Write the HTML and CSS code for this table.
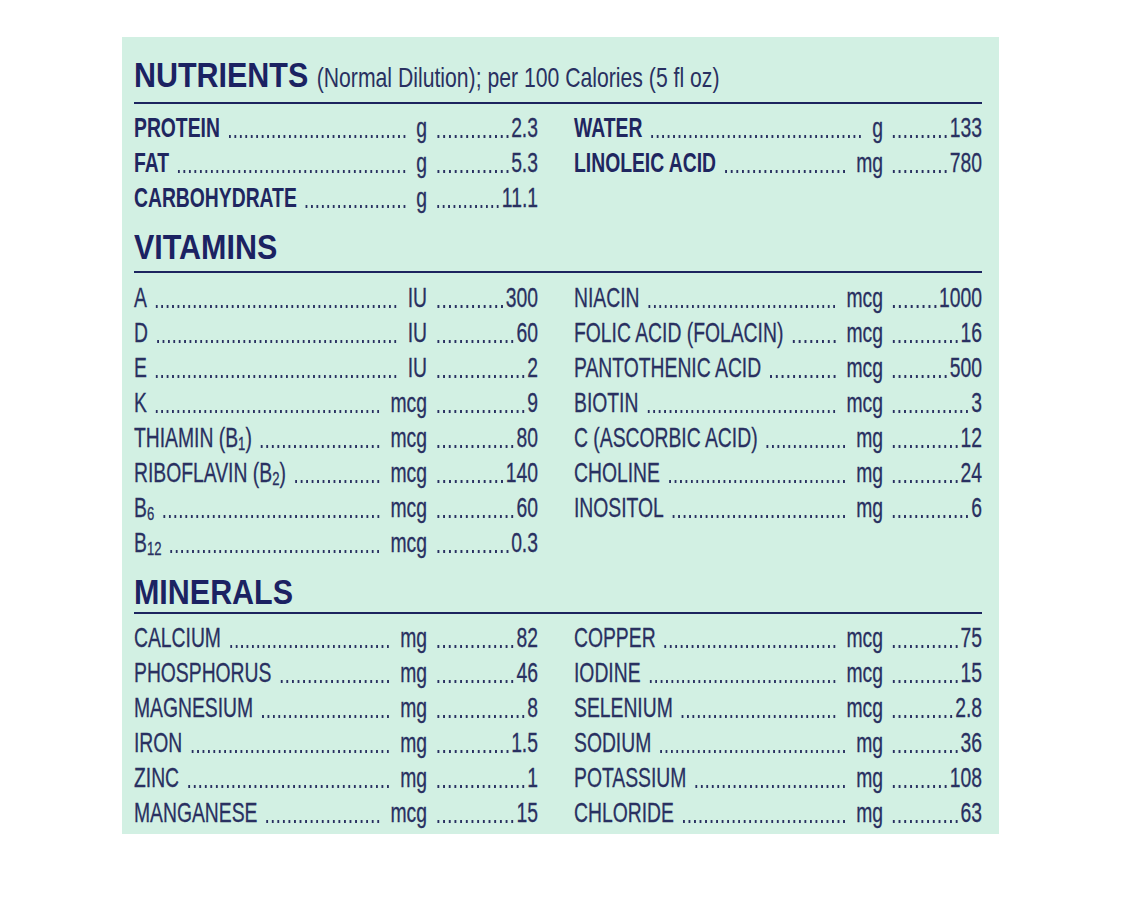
FILE: index.html
```html
<!DOCTYPE html>
<html lang="en">
<head>
<meta charset="utf-8">
<title>Nutrients</title>
<link rel="stylesheet" href="styles.css">
</head>
<body>
<div class="panel">

  <section class="sec sec--nutrients">
    <h2 class="sec-title"><span class="title-text">NUTRIENTS <span class="subtitle">(Normal Dilution); per 100 Calories (5 fl oz)</span></span></h2>
    <div class="cols">
      <div class="col col-l">
        <div class="row"><span class="name"><span class="label b">PROTEIN</span><span class="dots"></span></span><span class="unit">g</span><span class="amt"><span class="dots"></span><span class="val">2.3</span></span></div>
        <div class="row"><span class="name"><span class="label b">FAT</span><span class="dots"></span></span><span class="unit">g</span><span class="amt"><span class="dots"></span><span class="val">5.3</span></span></div>
        <div class="row"><span class="name"><span class="label b">CARBOHYDRATE</span><span class="dots"></span></span><span class="unit">g</span><span class="amt"><span class="dots"></span><span class="val">11.1</span></span></div>
      </div>
      <div class="col col-r">
        <div class="row"><span class="name"><span class="label b">WATER</span><span class="dots"></span></span><span class="unit">g</span><span class="amt"><span class="dots"></span><span class="val">133</span></span></div>
        <div class="row"><span class="name"><span class="label b">LINOLEIC ACID</span><span class="dots"></span></span><span class="unit">mg</span><span class="amt"><span class="dots"></span><span class="val">780</span></span></div>
      </div>
    </div>
  </section>

  <section class="sec sec--vitamins">
    <h2 class="sec-title"><span class="title-text">VITAMINS</span></h2>
    <div class="cols">
      <div class="col col-l">
        <div class="row"><span class="name"><span class="label">A</span><span class="dots"></span></span><span class="unit">IU</span><span class="amt"><span class="dots"></span><span class="val">300</span></span></div>
        <div class="row"><span class="name"><span class="label">D</span><span class="dots"></span></span><span class="unit">IU</span><span class="amt"><span class="dots"></span><span class="val">60</span></span></div>
        <div class="row"><span class="name"><span class="label">E</span><span class="dots"></span></span><span class="unit">IU</span><span class="amt"><span class="dots"></span><span class="val">2</span></span></div>
        <div class="row"><span class="name"><span class="label">K</span><span class="dots"></span></span><span class="unit">mcg</span><span class="amt"><span class="dots"></span><span class="val">9</span></span></div>
        <div class="row"><span class="name"><span class="label">THIAMIN (B<span class="sub">1</span>)</span><span class="dots"></span></span><span class="unit">mcg</span><span class="amt"><span class="dots"></span><span class="val">80</span></span></div>
        <div class="row"><span class="name"><span class="label">RIBOFLAVIN (B<span class="sub">2</span>)</span><span class="dots"></span></span><span class="unit">mcg</span><span class="amt"><span class="dots"></span><span class="val">140</span></span></div>
        <div class="row"><span class="name"><span class="label">B<span class="sub">6</span></span><span class="dots"></span></span><span class="unit">mcg</span><span class="amt"><span class="dots"></span><span class="val">60</span></span></div>
        <div class="row"><span class="name"><span class="label">B<span class="sub">12</span></span><span class="dots"></span></span><span class="unit">mcg</span><span class="amt"><span class="dots"></span><span class="val">0.3</span></span></div>
      </div>
      <div class="col col-r">
        <div class="row"><span class="name"><span class="label">NIACIN</span><span class="dots"></span></span><span class="unit">mcg</span><span class="amt"><span class="dots"></span><span class="val">1000</span></span></div>
        <div class="row"><span class="name"><span class="label">FOLIC ACID (FOLACIN)</span><span class="dots"></span></span><span class="unit">mcg</span><span class="amt"><span class="dots"></span><span class="val">16</span></span></div>
        <div class="row"><span class="name"><span class="label">PANTOTHENIC ACID</span><span class="dots"></span></span><span class="unit">mcg</span><span class="amt"><span class="dots"></span><span class="val">500</span></span></div>
        <div class="row"><span class="name"><span class="label">BIOTIN</span><span class="dots"></span></span><span class="unit">mcg</span><span class="amt"><span class="dots"></span><span class="val">3</span></span></div>
        <div class="row"><span class="name"><span class="label">C (ASCORBIC ACID)</span><span class="dots"></span></span><span class="unit">mg</span><span class="amt"><span class="dots"></span><span class="val">12</span></span></div>
        <div class="row"><span class="name"><span class="label">CHOLINE</span><span class="dots"></span></span><span class="unit">mg</span><span class="amt"><span class="dots"></span><span class="val">24</span></span></div>
        <div class="row"><span class="name"><span class="label">INOSITOL</span><span class="dots"></span></span><span class="unit">mg</span><span class="amt"><span class="dots"></span><span class="val">6</span></span></div>
      </div>
    </div>
  </section>

  <section class="sec sec--minerals">
    <h2 class="sec-title"><span class="title-text">MINERALS</span></h2>
    <div class="cols">
      <div class="col col-l">
        <div class="row"><span class="name"><span class="label">CALCIUM</span><span class="dots"></span></span><span class="unit">mg</span><span class="amt"><span class="dots"></span><span class="val">82</span></span></div>
        <div class="row"><span class="name"><span class="label">PHOSPHORUS</span><span class="dots"></span></span><span class="unit">mg</span><span class="amt"><span class="dots"></span><span class="val">46</span></span></div>
        <div class="row"><span class="name"><span class="label">MAGNESIUM</span><span class="dots"></span></span><span class="unit">mg</span><span class="amt"><span class="dots"></span><span class="val">8</span></span></div>
        <div class="row"><span class="name"><span class="label">IRON</span><span class="dots"></span></span><span class="unit">mg</span><span class="amt"><span class="dots"></span><span class="val">1.5</span></span></div>
        <div class="row"><span class="name"><span class="label">ZINC</span><span class="dots"></span></span><span class="unit">mg</span><span class="amt"><span class="dots"></span><span class="val">1</span></span></div>
        <div class="row"><span class="name"><span class="label">MANGANESE</span><span class="dots"></span></span><span class="unit">mcg</span><span class="amt"><span class="dots"></span><span class="val">15</span></span></div>
      </div>
      <div class="col col-r">
        <div class="row"><span class="name"><span class="label">COPPER</span><span class="dots"></span></span><span class="unit">mcg</span><span class="amt"><span class="dots"></span><span class="val">75</span></span></div>
        <div class="row"><span class="name"><span class="label">IODINE</span><span class="dots"></span></span><span class="unit">mcg</span><span class="amt"><span class="dots"></span><span class="val">15</span></span></div>
        <div class="row"><span class="name"><span class="label">SELENIUM</span><span class="dots"></span></span><span class="unit">mcg</span><span class="amt"><span class="dots"></span><span class="val">2.8</span></span></div>
        <div class="row"><span class="name"><span class="label">SODIUM</span><span class="dots"></span></span><span class="unit">mg</span><span class="amt"><span class="dots"></span><span class="val">36</span></span></div>
        <div class="row"><span class="name"><span class="label">POTASSIUM</span><span class="dots"></span></span><span class="unit">mg</span><span class="amt"><span class="dots"></span><span class="val">108</span></span></div>
        <div class="row"><span class="name"><span class="label">CHLORIDE</span><span class="dots"></span></span><span class="unit">mg</span><span class="amt"><span class="dots"></span><span class="val">63</span></span></div>
      </div>
    </div>
  </section>

</div>
</body>
</html>
```
FILE: styles.css
```css
html, body {
  margin: 0;
  padding: 0;
  background: #ffffff;
}

body {
  padding: 37px 0 0 122px;
  font-family: "Liberation Sans", Arial, sans-serif;
  color: #293061;
}

.panel {
  width: 877px;
  box-sizing: border-box;
  padding: 19px 17px 4px 12px;
  background: #d2f0e3;
}

/* ---------- section headings ---------- */

.sec-title {
  margin: 13px 0 0;
  padding-bottom: 5px;
  font: 700 35px/38px "Liberation Sans", Arial, sans-serif;
  color: #1b2262;
  border-bottom: 2px solid #1d255f;
  white-space: nowrap;
}

/* the label type is a condensed face: set in Arial metrics, then condense */
.title-text {
  display: inline-block;
  transform: scaleX(0.87);
  transform-origin: 0 50%;
}

.subtitle {
  display: inline-block;
  font: 400 28px/1 "Liberation Sans", Arial, sans-serif;
  color: #293061;
  transform: scaleX(0.87);
  transform-origin: 0 50%;
}

.sec--nutrients .sec-title {
  margin-top: 0;
  padding-bottom: 8px;
}

.sec--minerals .sec-title {
  padding-bottom: 1px;
}

/* ---------- two-column lists ---------- */

.cols {
  display: grid;
  width: 1229px;
  grid-template-columns: 585.5px 591.3px;
  column-gap: 52.2px;
  margin-top: 6px;
  transform: scaleX(0.69);
  transform-origin: 0 0;
}

.sec--vitamins .cols {
  margin-top: 7px;
}

.col-l { --amt: 160.9px; }
.col-r { --amt: 143.5px; }

.row {
  display: grid;
  grid-template-columns: minmax(0, 1fr) auto var(--amt);
  height: 35px;
  font-size: 28px;
  line-height: 35px;
  white-space: nowrap;
  -webkit-text-stroke: 0.3px currentColor;
}

.name {
  display: flex;
  min-width: 0;
}

.label {
  flex: none;
}

.label.b {
  font-weight: 700;
  color: #1f2660;
  -webkit-text-stroke: 0;
}

.sub {
  font-size: 19px;
  line-height: 1;
  vertical-align: -3px;
}

/* dot leaders */
.dots {
  flex: 1 1 0;
  min-width: 0;
  margin: 0 13.5px 0 10.5px;
  background-image: linear-gradient(to right,
    transparent 2.45px, currentColor 2.45px,
    currentColor 5.35px, transparent 5.35px);
  background-size: 7.8px 2.6px;
  background-position: 0 24.6px;
  background-repeat: space no-repeat;
}

.amt {
  display: flex;
}

.amt .dots {
  margin: 0 2px 0 12px;
}

.val {
  flex: none;
}
```
